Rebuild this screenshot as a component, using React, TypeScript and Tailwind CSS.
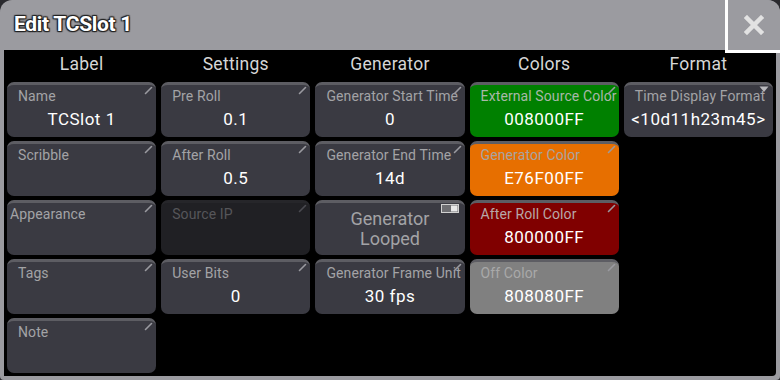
import React from "react";

type Cell = {
    label: string
    value?: string
    kind?: "edit" | "drop" | "toggle"
    bg?: string
    labelCls?: string
    valueCls?: string
    strip?: string
    pad?: string
    pen?: string
}

const Pencil = ({ color = "#9a9aa0" }: { color?: string }) => (
    <svg width="9" height="9" viewBox="0 0 9 9" className="absolute right-[3px] top-[1px]">
        <path d="M1.5 7.5 L7.5 1.5" stroke={color} strokeWidth="1.6" strokeLinecap="round" />
    </svg>
)

const Drop = () => (
    <svg width="10" height="7" viewBox="0 0 10 7" className="absolute right-[4px] top-[1px]">
        <path d="M0.5 0.5 H9.5 L5 6 Z" fill="#b8b8bc" />
    </svg>
)

const Toggle = () => (
    <svg width="18" height="9" viewBox="0 0 18 9" className="absolute right-[6px] top-[1px]">
        <rect x="0.5" y="0.5" width="17" height="8" fill="#6e6e72" stroke="#d0d0d0" />
        <rect x="10" y="1.5" width="6.5" height="6" fill="#e8e8e8" />
    </svg>
)

function Tile({ c }: { c: Cell }) {
    if (c.kind === "toggle") {
        return (
            <div className="relative h-[55px] rounded-[7px] border-t-[3px] border-[#5d5d63] bg-[#3a3a42] flex flex-col items-center justify-center leading-[20px] text-[18px] text-[#a3a3a6]">
                <Toggle />
                <span>Generator</span>
                <span>Looped</span>
            </div>
        )
    }
    return (
        <div className={`relative h-[55px] rounded-[7px] border-t-[3px] flex flex-col ${c.bg ?? "bg-[#3a3a42]"} ${c.strip ?? "border-[#5d5d63]"}`}>
            {c.kind === "drop" ? <Drop /> : <Pencil color={c.pen} />}
            <span className={`${c.pad ?? "pl-[11px]"} pt-[3px] text-[14px] leading-[17px] tracking-[0.1px] whitespace-nowrap ${c.labelCls ?? "text-[#a3a3a6]"}`}>{c.label}</span>
            {c.value && (
                <span className={`text-center text-[17px] leading-[20px] mt-[4px] tracking-[0.5px] whitespace-nowrap ${c.valueCls ?? "text-white"}`}>{c.value}</span>
            )}
        </div>
    )
}

const columns: { title: string, cells: Cell[] }[] = [
    {
        title: "Label",
        cells: [
            { label: "Name", value: "TCSlot 1" },
            { label: "Scribble" },
            { label: "Appearance", pad: "pl-[3px]" },
            { label: "Tags" },
            { label: "Note" },
        ]
    },
    {
        title: "Settings",
        cells: [
            { label: "Pre Roll", value: "0.1" },
            { label: "After Roll", value: "0.5" },
            { label: "Source IP", bg: "bg-[#202024]", strip: "border-[#26262a]", labelCls: "text-[#56565a]", pen: "#4a4a50" },
            { label: "User Bits", value: "0" },
        ]
    },
    {
        title: "Generator",
        cells: [
            { label: "Generator Start Time", value: "0" },
            { label: "Generator End Time", value: "14d" },
            { label: "", kind: "toggle" },
            { label: "Generator Frame Unit", value: "30 fps" },
        ]
    },
    {
        title: "Colors",
        cells: [
            { label: "External Source Color", value: "008000FF", bg: "bg-[#008000]", labelCls: "text-[#a9b8a9]" },
            { label: "Generator Color", value: "E76F00FF", bg: "bg-[#e76f00]", labelCls: "text-[#a8a4a0]" },
            { label: "After Roll Color", value: "800000FF", bg: "bg-[#800000]", labelCls: "text-[#b8a8a8]" },
            { label: "Off Color", value: "808080FF", bg: "bg-[#808080]", labelCls: "text-[#a9a9a9]" },
        ]
    },
    {
        title: "Format",
        cells: [
            { label: "Time Display Format", value: "<10d11h23m45>", kind: "drop" },
        ]
    },
]

export default function App() {
    return (
        <div className="w-[780px] h-[380px] bg-[#2a2a2e] font-['Roboto','Liberation_Sans',sans-serif]">
            <div className="relative w-full h-full rounded-t-[12px] rounded-b-[4px] bg-[#9b9ba0] flex flex-col px-[4px] pb-[4px] overflow-hidden">
                {/* TITLE */}
                <div className="h-[50px] shrink-0 flex items-center pl-[10px]">
                    <h1 className="text-[21px] font-bold text-white tracking-[-0.3px] [text-shadow:0_0_2px_#222,1px_1px_1px_#222,-1px_-1px_1px_#222,1px_-1px_1px_#222,-1px_1px_1px_#222]">Edit TCSlot 1</h1>
                </div>
                <div className="absolute right-0 top-0 w-[55px] h-[53px] border-l-[3px] border-b-[3px] border-white bg-[#9b9ba0] rounded-tr-[12px] flex items-center justify-center">
                    <svg width="20" height="20" viewBox="0 0 20 20">
                        <path d="M3 3 L17 17 M17 3 L3 17" stroke="#e2e2e2" strokeWidth="4.5" strokeLinecap="square" />
                    </svg>
                </div>

                {/* CONTENT */}
                <div className="flex-1 bg-black rounded-br-[4px] grid grid-cols-5 gap-x-[5px] px-[3px]">
                    {columns.map((col) => (
                        <div key={col.title} className="flex flex-col">
                            <div className="h-[28px] pt-[1px] flex items-center justify-center text-[17.5px] tracking-[0.3px] text-[#d6d6d6]">{col.title}</div>
                            <div className="flex flex-col gap-[4px] mt-[4px]">
                                {col.cells.map((c, i) => <Tile key={i} c={c} />)}
                            </div>
                        </div>
                    ))}
                </div>
            </div>
        </div>
    )
}
